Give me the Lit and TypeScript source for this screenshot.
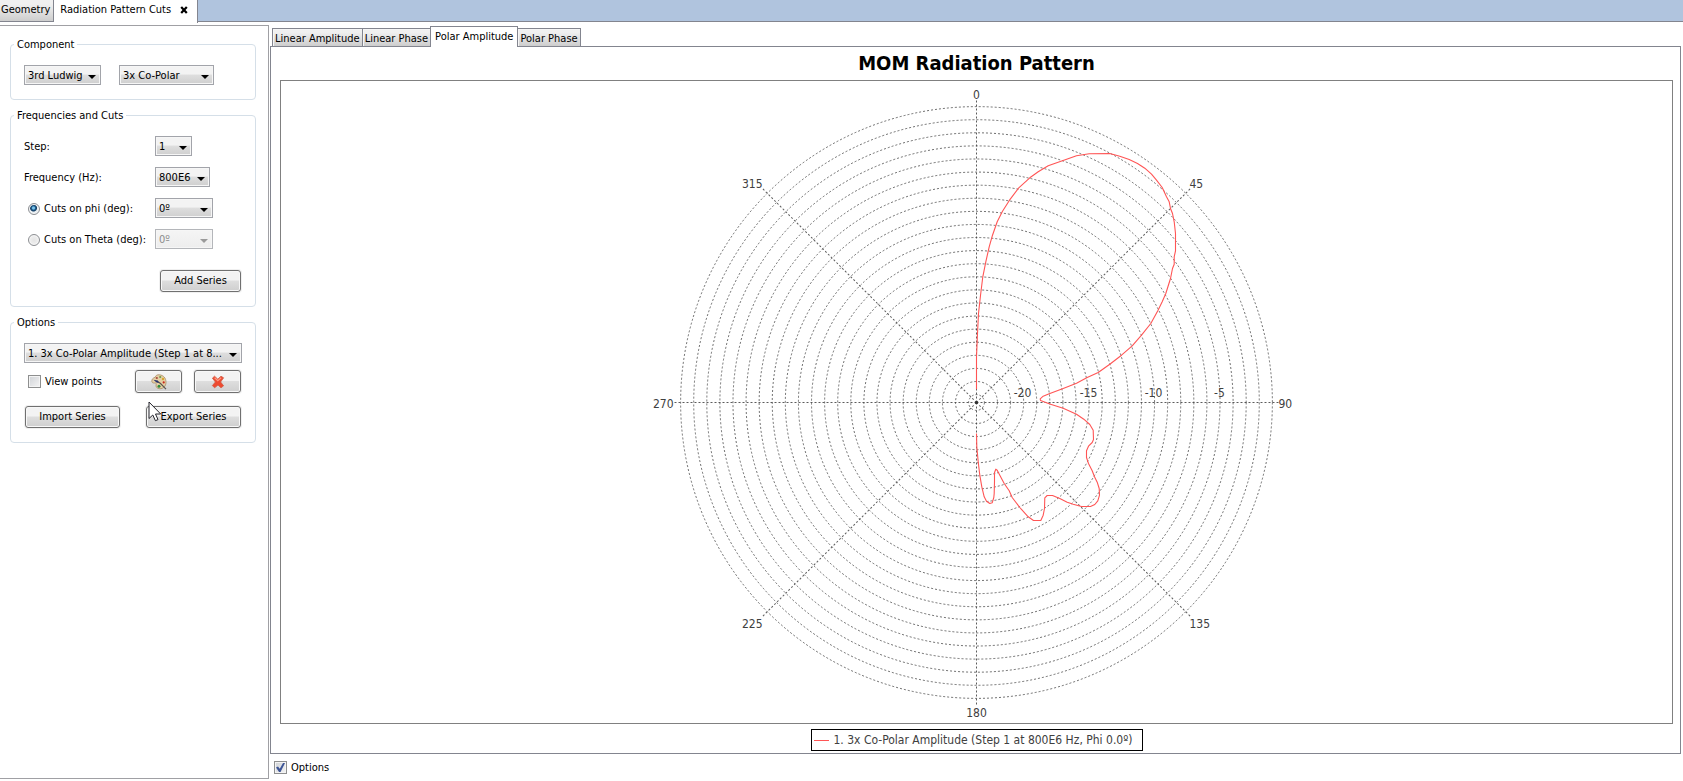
import { LitElement, html, svg, css } from "lit";
import { customElement, property, state } from "lit/decorators.js";
import { classMap } from "lit/directives/class-map.js";

type Point = [number, number];

const RING_STEP = 13.09;
const RING_FIRST = 7.9;
const RING_COUNT = 23;
const SPOKE = 302;
const HALF = 321;

const rings = Array.from({ length: RING_COUNT }, (_, i) => RING_FIRST + RING_STEP * i);

const angleLabels = [
  { text: "0", x: 0, y: -308, anchor: "middle" },
  { text: "45", x: 213, y: -219, anchor: "start" },
  { text: "90", x: 302, y: 1, anchor: "start" },
  { text: "135", x: 213, y: 221, anchor: "start" },
  { text: "180", x: 0, y: 310, anchor: "middle" },
  { text: "225", x: -214, y: 221, anchor: "end" },
  { text: "270", x: -303, y: 1, anchor: "end" },
  { text: "315", x: -214, y: -219, anchor: "end" },
];

const radialLabels = [
  { text: "-20", x: 46 },
  { text: "-15", x: 112 },
  { text: "-10", x: 177 },
  { text: "-5", x: 243 },
];

// Amplitude samples, in chart units from the pole.
const series: Point[] = [
  [0, -13.3], [0, -45.7], [1, -69], [2, -89], [4, -107], [6.3, -125.7], [9.3, -140.7], [12.7, -155.7],
  [16, -167.3], [20.7, -180.7], [26, -191.3], [33, -202.3], [42, -214.3], [53.3, -224.7], [61.7, -230.7],
  [71.7, -236.7], [87.3, -242.3], [100, -246.7], [112.7, -248.7], [133.3, -249], [143.3, -246.3],
  [152.7, -243], [161, -239], [168.3, -234.3], [175, -228.3], [180, -222.3], [185.7, -215], [190, -205.7],
  [192.7, -200.7], [194, -194], [196, -189], [197.7, -180.7], [199, -169], [199, -151.7], [197.7, -145.7],
  [197.7, -138.3], [196, -134], [194, -124], [189.3, -109], [185.7, -100.7], [181.3, -91.7], [174.3, -79],
  [165, -67.3], [155.7, -56.7], [145, -47.3], [133.3, -38.3], [121.7, -30], [110.7, -25], [100, -19.3],
  [86.7, -14], [72.7, -8.7], [66.7, -6.3], [63.7, -3.7], [64, -2], [66.7, -1], [74, 1.7], [86.7, 5.7],
  [100, 11.7], [107.3, 16.7], [113.3, 22], [116.7, 27.7], [117, 37], [115.7, 40], [112, 43.7], [110, 48.3],
  [110, 55], [112, 61], [115.7, 68.3], [118, 74.3], [120.7, 79.7], [122.7, 86], [123, 92.7], [121.3, 98.3],
  [118.3, 102], [114, 104], [105, 104], [96.7, 101.7], [90.7, 99.7], [83.3, 96], [76, 93], [70.7, 93],
  [68.3, 95.3], [68, 106], [66.7, 112.7], [64.3, 118], [57, 118], [51.7, 114.3], [43.3, 105], [35.7, 95],
  [32.7, 88.3], [27.7, 81], [23.3, 72.7], [20.7, 67.7], [19.3, 66.7], [18, 70], [18, 79], [17.7, 91],
  [17.3, 95], [15.7, 100.3], [13.3, 101], [10, 98.7], [7.7, 94.3], [5.3, 84.3], [3.3, 72.7], [1.7, 59.3],
  [0.3, 44.3], [0, 31],
];

@customElement("polar-chart")
export class PolarChart extends LitElement {
  static styles = css`
    :host { display: block; min-height: 0; }
    .plot { display: block; width: 100%; height: 100%; }
    .grid { fill: none; stroke: #404040; stroke-width: 1; stroke-dasharray: 2 2; stroke-opacity: 0.75; }
    .spoke { stroke-opacity: 0.85; }
    .pole { fill: #303030; }
    .series { fill: none; stroke: #ff5555; stroke-width: 1.1; stroke-linejoin: round; }
    .label { fill: #404040; font: 12px "DejaVu Sans Condensed", "Noto Sans", sans-serif; }
  `;

  render() {
    const d = "M" + series.map(([x, y]) => `${x} ${y}`).join("L");
    return html`
      <svg class="plot" viewBox="${-HALF} ${-HALF} ${HALF * 2} ${HALF * 2}" role="img" aria-label="Polar plot">
        <g transform="translate(0 0.5)">
          ${rings.map((r) => svg`<circle class="grid" r=${r}></circle>`)}
          ${[0, 45, 90, 135, 180, 225, 270, 315].map(
            (a) => svg`<line class="grid spoke" x1="0" y1="0" x2="0" y2=${-SPOKE} transform="rotate(${a})"></line>`
          )}
          <circle class="pole" r="1.5"></circle>
          <path class="series" d=${d}></path>
          ${radialLabels.map((l) => svg`<text class="label" x=${l.x} y="-6" text-anchor="middle">${l.text}</text>`)}
          ${angleLabels.map(
            (l) => svg`<text class="label" x=${l.x} y=${l.y + 4} text-anchor=${l.anchor}>${l.text}</text>`
          )}
        </g>
      </svg>
    `;
  }
}

@customElement("drop-down")
export class DropDown extends LitElement {
  @property() value = "";
  @property() label = "";
  @property({ type: Boolean }) disabled = false;

  static styles = css`
    :host { display: block; position: relative; }
    .select {
      appearance: none; box-sizing: border-box; display: block; width: 100%; height: 20px; margin: 0;
      padding: 0 16px 0 3px; border: 1px solid #a2a4aa; border-radius: 0; color: #000;
      background: linear-gradient(#f3f3f3 0 45%, #dedede 50%, #cfcfcf);
      box-shadow: inset 0 0 0 1px #f6f6f6;
      font: 11px "DejaVu Sans Condensed", "Noto Sans", sans-serif;
    }
    .select:disabled { opacity: 1; color: #8c8c8c; background: linear-gradient(#f5f5f5, #ededed); border-color: #b4b6ba; }
    .arrow {
      position: absolute; right: 5px; top: 10px; pointer-events: none;
      border: 4px solid transparent; border-top-color: #000; border-bottom: 0;
    }
    .off { border-top-color: #9a9a9a; }
  `;

  render() {
    return html`
      <select class="select" aria-label=${this.label} ?disabled=${this.disabled}><option>${this.value}</option></select>
      <span class=${classMap({ arrow: true, off: this.disabled })}></span>
    `;
  }
}

@customElement("app-root")
export class AppRoot extends LitElement {
  @state() private cut = "phi";
  @state() private tab = "Polar Amplitude";

  static styles = css`
    :host {
      display: flex; flex-direction: column; height: 100vh; overflow: hidden; background: #fff; color: #000;
      font: 11px/14px "DejaVu Sans Condensed", "Noto Sans", sans-serif;
    }
    button, input { font: inherit; color: inherit; margin: 0; box-sizing: border-box; }
    .tab { border: 0; white-space: nowrap; background: linear-gradient(#f0f0f0 0 20%, #cdcdcd); }

    .documents { flex: none; display: flex; height: 22px; background: #b0c4de; box-shadow: inset 0 -1px #83858f; }
    .documents .tab { height: 22px; padding: 0 3px 1px 1px; border: solid #83858f; border-width: 0 1px 1px 0; }
    .documents .open {
      display: flex; align-items: center; gap: 9px; height: 23px; padding: 0 9px 4px 6px;
      background: #fff; border-bottom: 0; z-index: 1;
    }
    .close { width: 8px; height: 8px; }

    .main { flex: 1; min-height: 0; display: flex; padding: 3px 2px 2px 0; }
    .sidebar {
      flex: none; width: 269px; box-sizing: border-box; display: flex; flex-direction: column; gap: 7px;
      padding: 10px 12px 0 10px; border: solid #a0a0a4; border-width: 1px 1px 1px 0;
    }
    .group {
      display: flex; flex-direction: column; min-width: 0; margin: 0; padding: 13px 13px 14px; border: 1px solid #d5dfe8; border-radius: 4px;
    }
    .group legend { margin-left: -10px; padding: 2px 3px 0; line-height: 14px; }
    .row { display: flex; align-items: center; justify-content: space-between; }
    .component { justify-content: flex-start; gap: 18px; }
    .ludwig { width: 77px; }
    .polar { width: 95px; }
    .cuts { display: grid; grid-template-columns: 131px auto; row-gap: 11px; align-items: center; justify-items: start; }
    .cuts > span, .cuts > label { padding-top: 2px; }
    .step { width: 37px; }
    .frequency { width: 55px; }
    .angle { width: 58px; }
    .choice { display: flex; align-items: center; gap: 4px; }
    .indent { padding-left: 4px; }
    .push {
      display: flex; align-items: center; justify-content: center; height: 22px; padding: 0;
      border: 1px solid #707070; border-radius: 3px;
      background: linear-gradient(#f3f3f3 0 45%, #dedede 50%, #cfcfcf);
      box-shadow: inset 0 0 0 1px #f8f8f8, 0 0 0 1px #f0f0f0;
    }
    .add { align-self: flex-end; width: 81px; margin: 21px 1px 0; }
    .tools { margin: 7px 1px 0 0; }
    .pair { display: flex; gap: 12px; }
    .icon { width: 47px; height: 23px; }
    .files { margin: 13px 1px 0; }
    .file { width: 95px; }
    .export { position: relative; }
    .pointer { position: absolute; left: 2px; top: -5px; width: 14px; height: 21px; }

    .radio {
      appearance: none; width: 12px; height: 12px; border: 1px solid #8c8e92; border-radius: 50%;
      background: radial-gradient(#e4e4e4, #f6f6f6); box-shadow: inset 0 0 0 1px #f6f6f6;
    }
    .radio:checked { background: radial-gradient(circle at 45% 40%, #7cc4ea 0 1px, #1c5f93 2px, #123a5e 3px, #e8eef2 4px); }
    .check {
      appearance: none; position: relative; width: 13px; height: 13px; border: 1px solid #8e8f8f;
      background: linear-gradient(135deg, #cfd2d6, #f4f4f4); background-clip: content-box; padding: 1px;
      box-shadow: inset 0 0 0 1px #f4f4f4;
    }
    .check:checked::before {
      content: ""; position: absolute; inset: 1px; background: #3d5596;
      clip-path: polygon(0 50%, 22% 40%, 42% 64%, 78% 0, 100% 0, 50% 100%, 34% 100%);
    }

    .content { flex: 1; min-width: 0; display: flex; flex-direction: column; margin-left: 1px; }
    .views { flex: none; display: flex; align-items: flex-end; height: 21px; padding-left: 2px; }
    .views .tab {
      height: 18px; padding: 2px 2px 0; border: 1px solid #83858f; border-right-width: 0; border-bottom: 0;
      box-shadow: inset 1px 1px #f6f6f6;
    }
    .views .tab:last-child { border-right-width: 1px; }
    .views .open {
      height: 21px; margin-bottom: -1px; padding: 0 4px 1px; background: #fff; z-index: 1; box-shadow: none; border-right-width: 1px;
    }
    .views .open + .tab { border-left-width: 0; }
    .panel {
      flex: 1; min-height: 0; box-sizing: border-box; display: flex; flex-direction: column; align-items: center;
      border: 1px solid #83858f; padding: 0 7px 2px 9px;
    }
    .title { flex: none; margin: 0; font-size: 20px; line-height: 33px; font-weight: bold; }
    .chart { flex: 1; align-self: stretch; border: 1px solid #808080; }
    .key {
      flex: none; display: flex; align-items: center; gap: 5px; margin-top: 5px; padding: 0 9px 0 2px;
      border: 1px solid #000; font-size: 12px; line-height: 20px; color: #404040;
    }
    .swatch { width: 15px; height: 1px; background: #ff5555; }
    .footer { flex: none; display: flex; align-items: center; box-sizing: border-box; height: 25px; padding: 2px 4px 0; }
  `;

  private views = ["Linear Amplitude", "Linear Phase", "Polar Amplitude", "Polar Phase"];

  render() {
    return html`
      <nav class="documents" role="tablist">
        <button class="tab" role="tab">Geometry</button>
        <button class="tab open" role="tab" aria-selected="true">
          Radiation Pattern Cuts
          <svg class="close" viewBox="0 0 8 8"><path d="M1.2 1 6.8 7M6.8 1 1.2 7" stroke="#000" stroke-width="2.2" /></svg>
        </button>
      </nav>
      <div class="main">
        <aside class="sidebar">
          <fieldset class="group">
            <legend>Component</legend>
            <div class="row component">
              <drop-down class="ludwig" label="Component definition" value="3rd Ludwig"></drop-down>
              <drop-down class="polar" label="Component" value="3x Co-Polar"></drop-down>
            </div>
          </fieldset>

          <fieldset class="group">
            <legend>Frequencies and Cuts</legend>
            <div class="cuts">
              <span>Step:</span>
              <drop-down class="step" label="Step" value="1"></drop-down>
              <span>Frequency (Hz):</span>
              <drop-down class="frequency" label="Frequency" value="800E6"></drop-down>
              <label class="choice indent">
                <input class="radio" type="radio" name="cut" .checked=${this.cut === "phi"} @change=${() => (this.cut = "phi")} />
                Cuts on phi (deg):
              </label>
              <drop-down class="angle" label="Phi" value="0º" ?disabled=${this.cut !== "phi"}></drop-down>
              <label class="choice indent">
                <input class="radio" type="radio" name="cut" .checked=${this.cut === "theta"} @change=${() => (this.cut = "theta")} />
                Cuts on Theta (deg):
              </label>
              <drop-down class="angle" label="Theta" value="0º" ?disabled=${this.cut !== "theta"}></drop-down>
            </div>
            <button class="push add">Add Series</button>
          </fieldset>

          <fieldset class="group">
            <legend>Options</legend>
            <drop-down label="Series" value="1. 3x Co-Polar Amplitude (Step 1 at 8..."></drop-down>
            <div class="row tools">
              <label class="choice indent"><input class="check" type="checkbox" />View points</label>
              <div class="pair">
                <button class="push icon" aria-label="Series colour">
                  <svg width="16" height="16" viewBox="0 0 16 16">
                    <path d="M8.500 .8C6 .4 4.600 1.600 4.300 3.200 2 3.800.6 5.400.8 7.300c.2 1.500 1.500 2 3 1.700 1.200-.2 1.700.6 1.300 1.800-.6 2 .8 3.700 3.600 3.900 3.600.2 6.300-2.600 6.300-6.500C15 4 12.400 1.200 8.500.8Z" fill="#e6cfa4" stroke="#a08358" stroke-width=".7" />
                    <circle cx="5.800" cy="4" r="1.100" fill="#a8483c" />
                    <circle cx="9.200" cy="3" r="1.100" fill="#6a9a48" />
                    <circle cx="12" cy="5" r="1.200" fill="#d8a52c" />
                    <circle cx="8" cy="12.200" r="1.500" fill="#2f8a3c" />
                    <circle cx="12.700" cy="8.400" r="1.100" fill="#c8281e" />
                    <path d="M6 7 9.500 9.500 15 15.200" fill="none" stroke="#5a5450" stroke-width="1.200" />
                    <path d="M2.500 5.800 6.500 6.500 8 9 5.500 8.600Z" fill="#26306c" />
                  </svg>
                </button>
                <button class="push icon" aria-label="Delete series">
                  <svg width="14" height="14" viewBox="0 0 14 14">
                    <path d="M3.500 1.200 6.800 4.200 10 1.200 12.600 2.800 9.600 7 12.600 10.800 10 12.800 7 10 3.600 12.800 1.400 10.600 4.400 7 1.400 3.200Z" fill="#ee4a30" stroke="#cf5a44" stroke-width=".8" stroke-linejoin="round" />
                    <path d="M3.600 2.800 6.800 5.800 10.200 2.800" fill="none" stroke="#ff9880" stroke-width="1.200" />
                  </svg>
                </button>
              </div>
            </div>
            <div class="row files">
              <button class="push file">Import Series</button>
              <div class="export">
                <button class="push file">Export Series</button>
                <svg class="pointer" viewBox="0 0 14 21">
                  <path d="M1 1V17.500L4.800 14 7.400 19.700 10 18.600 7.500 13H12.700Z" fill="#fff" stroke="#23232b" stroke-width="1" />
                </svg>
              </div>
            </div>
          </fieldset>
        </aside>

        <section class="content">
          <div class="views" role="tablist">
            ${this.views.map(
              (v) => html`<button
                role="tab"
                class=${classMap({ tab: true, open: v === this.tab })}
                aria-selected=${v === this.tab}
                @click=${() => (this.tab = v)}
              >${v}</button>`
            )}
          </div>
          <div class="panel">
            <h1 class="title">MOM Radiation Pattern</h1>
            <polar-chart class="chart"></polar-chart>
            <div class="key"><span class="swatch"></span>1. 3x Co-Polar Amplitude (Step 1 at 800E6 Hz, Phi 0.0º)</div>
          </div>
          <div class="footer">
            <label class="choice"><input class="check" type="checkbox" checked />Options</label>
          </div>
        </section>
      </div>
    `;
  }
}
